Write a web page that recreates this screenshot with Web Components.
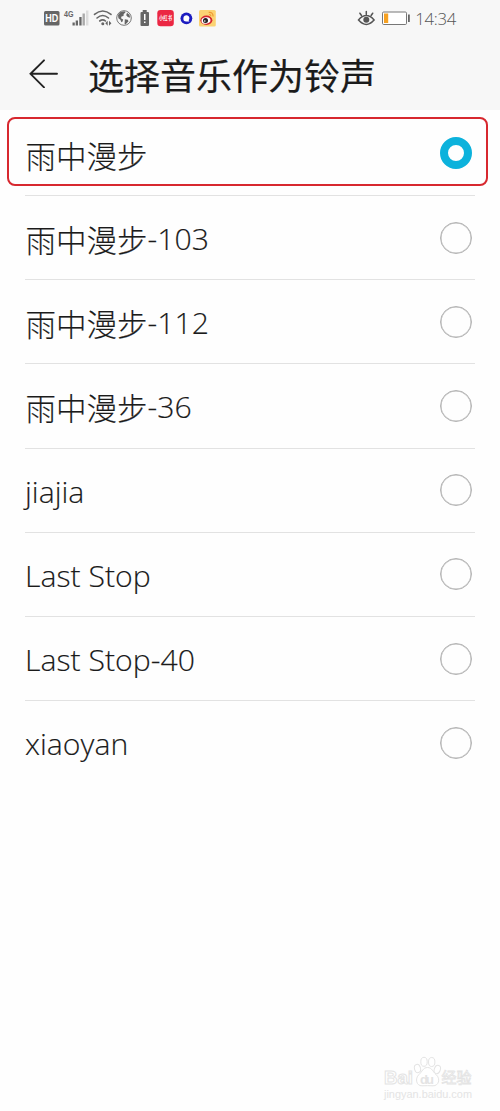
<!DOCTYPE html>
<html lang="zh-CN">
<head>
<meta charset="UTF-8">
<title>选择音乐作为铃声</title>
<style>
    html, body {
        margin: 0;
        background: #fefefe;
    }

    body {
        font-family: "Open Sans", "Noto Sans CJK SC", sans-serif;
        color: #1b1b1b;
    }
</style>
</head>
<body>
<ringtone-screen></ringtone-screen>

<script>
const templateStatus = document.createElement("template");
templateStatus.innerHTML = `
    <style>
        :host {
            display: flex;
            justify-content: space-between;
            height: 36px;
            padding: 0 44px;
            box-sizing: border-box;
            color: #666;
        }

        .group {
            display: flex;
            align-items: center;
            height: 36px;
        }

        svg {
            display: block;
            flex: none;
        }

        text {
            font-family: "Liberation Sans", "Noto Sans CJK SC", sans-serif;
            font-weight: 700;
        }

        .time {
            font-size: 16.8px;
            font-weight: 300;
            line-height: 34px;
            padding-top: 2px;
            color: #555;
            margin-left: 4px;
            letter-spacing: -0.3px;
        }
    </style>

    <div class="group">
        <svg width="16" height="36" viewBox="0 0 16 36">
            <rect x="0" y="11" width="15.5" height="14.5" rx="1.5" fill="#666"/>
            <text x="7.8" y="22" font-size="10.5" textLength="13" lengthAdjust="spacingAndGlyphs" text-anchor="middle" fill="#fff">HD</text>
        </svg>
        <svg width="31" height="36" viewBox="60 0 31 36">
            <text x="64" y="17.3" font-size="9.5" textLength="9.5" lengthAdjust="spacingAndGlyphs" fill="#666">4G</text>
            <path d="M72.5 22.5h2.3v3h-2.3zM75.7 20.500h2.300v5h-2.300zM79.300 17h2.300v8.500h-2.300z" fill="#666"/>
            <path d="M82.500 13.500h2.400v12h-2.400z" fill="#aaa"/>
            <path d="M86 10.500h2.400v15H86z" fill="#ddd"/>
        </svg>
        <svg width="24" height="36" viewBox="91 0 24 36">
            <g fill="none" stroke="#666" stroke-width="1.6" stroke-linecap="round">
                <path d="M94.500 14.400Q102.700 7.600 111 14.400M97 18Q102.700 13 108.500 18M99.700 21Q102.700 18.700 105.500 21"/>
            </g>
            <circle cx="102.8" cy="23.8" r="1.5" fill="#666"/>
            <path d="M107.700 20.800v5l-2.400-2.500zM109 20.800v5l2.400-2.500z" fill="#666"/>
        </svg>
        <svg width="20" height="36" viewBox="115 0 20 36">
            <circle cx="124" cy="18" r="7.3" fill="#f8f8f8" stroke="#777" stroke-width="1"/>
            <path d="M118 15l2.500-3 4-.8 1 1.300-1.800 1.500-.2 2-2 .5-.5 1.700 2.200 1.200-.8 2.400-1 .5-1-2.500-2-1.600zM127 12.800l2.500 2 .6 3-2.300-.8-1.600-1.700zM124.800 19.300l2.900.5.8 1.500-2.800 2.900-1.100-.3z" fill="#666"/>
        </svg>
        <svg width="18" height="36" viewBox="135 0 18 36">
            <path d="M142.700 10h4v2h1.300q1 0 1 1v12q0 1-1 1h-6.500q-1 0-1-1V13q0-1 1-1h1.200z" fill="#666"/>
            <path d="M144 14h1.500v6H144zM144 21.500h1.500V23H144z" fill="#fff"/>
        </svg>
        <svg width="24" height="36" viewBox="153 0 24 36">
            <rect x="157.3" y="10" width="16.5" height="16.2" rx="3.2" fill="#eb2743"/>
            <text x="165.5" y="20.3" font-size="5.2" textLength="13" lengthAdjust="spacingAndGlyphs" text-anchor="middle" fill="#fff">小红书</text>
        </svg>
        <svg width="19" height="36" viewBox="177 0 19 36">
            <circle cx="186.4" cy="18.3" r="5.9" fill="#1c1cc0"/>
            <path d="M183.400 18.300a3 3 0 1 1 5.200 2l.8 1.300h-3a3 3 0 0 1-3-3.300z" fill="#fff"/>
        </svg>
        <svg width="22" height="36" viewBox="196 0 22 36">
            <rect x="199" y="10" width="16.8" height="16.4" rx="1.5" fill="#fbd373"/>
            <ellipse cx="206.4" cy="20.2" rx="6" ry="4.7" fill="#d4252d"/>
            <ellipse cx="206" cy="20.5" rx="4.5" ry="3.2" fill="#fff" transform="rotate(-8 206 20.5)"/>
            <circle cx="205.5" cy="20.5" r="2.5" fill="#222"/>
            <circle cx="204.8" cy="21" r=".8" fill="#fff"/>
            <path d="M208.700 12.400q4.300-.6 4.400 4M209 14.500q1.900 0 1.800 1.800" fill="none" stroke="#ef9a32" stroke-width="1.2"/>
        </svg>
    </div>

    <div class="group">
        <svg width="20" height="36" viewBox="357 0 20 36">
            <g fill="none" stroke="#555" stroke-width="1.5" stroke-linecap="round">
                <path d="M358.500 20q7.800-8.800 15.600 0-7.800 8.800-15.600 0zM366.300 14.500v-3M361.500 15.500l-1.600-2.300M371.100 15.500l1.600-2.300"/>
            </g>
            <circle cx="366.3" cy="19.8" r="3" fill="#555"/>
        </svg>
        <svg width="34" height="36" viewBox="377 0 34 36">
            <rect x="382.5" y="12" width="24" height="12.5" rx="1.2" fill="#fff" stroke="#777"/>
            <rect x="384" y="13.5" width="4.2" height="9.5" fill="#f6a122"/>
            <rect x="408" y="14.5" width="1.8" height="7.5" fill="#666"/>
        </svg>
        <span class="time">14:34</span>
    </div>
`;

class StatusBar extends HTMLElement {
    constructor() {
        super();
        this.attachShadow({ mode: "open" });
        this.shadowRoot.appendChild(templateStatus.content.cloneNode(true));
    }
}

const templateHeader = document.createElement("template");
templateHeader.innerHTML = `
    <style>
        :host {
            display: flex;
            align-items: center;
            height: 74px;
            padding-left: 28px;
        }

        svg {
            display: block;
            margin-right: 30px;
        }

        h1 {
            margin: 0;
            padding-top: 2px;
            font: 400 36px/72px "Noto Sans CJK SC", sans-serif;
            -webkit-text-stroke: 0.2px currentColor;
        }
    </style>

    <svg width="30" height="30" viewBox="0 0 30 30" fill="none" stroke="#222" stroke-width="1.9" stroke-linecap="round">
        <path d="M3 15.800h26M16 2.300L2.500 15.800 16 29.300"/>
    </svg>
    <h1><slot></slot></h1>
`;

class PageHeader extends HTMLElement {
    constructor() {
        super();
        this.attachShadow({ mode: "open" });
        this.shadowRoot.appendChild(templateHeader.content.cloneNode(true));
    }
}

const templateItem = document.createElement("template");
templateItem.innerHTML = `
    <style>
        :host {
            display: flex;
            align-items: center;
            justify-content: space-between;
            position: relative;
            height: 84.2px;
            margin: 0 25px;
            padding-right: 3px;
            box-sizing: border-box;
            border-bottom: 1px solid #e2e2e2;
            font-size: 30.2px;
            font-weight: 300;
        }

        :host(:last-of-type) {
            border-bottom-color: transparent;
        }

        .label {
            display: flex;
            line-height: 40px;
            padding-top: 3px;
            -webkit-text-stroke: 0.15px currentColor;
        }

        /* han glyphs sit a little lower than the latin ones */
        .han {
            padding-top: 1px;
            margin-bottom: -1px;
            font-size: 30.5px;
        }

        .han:not(:empty) {
            margin-left: 0.5px;
        }

        .radio {
            width: 32px;
            height: 32px;
            box-sizing: border-box;
            border: 1.5px solid #b3b3b3;
            border-radius: 50%;
            box-shadow: inset 0 0 0 0.5px #b3b3b3;
        }

        :host([checked]) .radio {
            border: 8px solid #0cb2dc;
            box-shadow: none;
        }

        /* marker frame drawn over the chosen row */
        :host([checked])::after {
            content: "";
            position: absolute;
            top: 5px;
            left: -18px;
            right: -13px;
            height: 69px;
            box-sizing: border-box;
            border: 2px solid #d7282f;
            border-radius: 8px;
        }
    </style>

    <span class="label"><span class="han"></span><span class="latin"></span></span>
    <span class="radio"></span>
`;

class RingtoneItem extends HTMLElement {
    constructor() {
        super();
        this.attachShadow({ mode: "open" });
        this.shadowRoot.appendChild(templateItem.content.cloneNode(true));
    }

    connectedCallback() {
        const [, han, latin] = this.getAttribute("name").match(/^([\u4e00-\u9fff]*)(.*)$/);
        this.shadowRoot.querySelector(".han").textContent = han;
        this.shadowRoot.querySelector(".latin").textContent = latin;
    }
}

const templateWatermark = document.createElement("template");
templateWatermark.innerHTML = `
    <style>
        :host {
            display: block;
            width: 92px;
        }

        svg {
            display: block;
        }

        text {
            font-family: "Liberation Sans", "Noto Sans CJK SC", sans-serif;
        }
    </style>

    <svg width="92" height="46" viewBox="382 1055 92 46">
        <g fill="#fff" stroke="#e4e4e4" stroke-width="1">
            <ellipse cx="417.5" cy="1068.5" rx="3" ry="4.2" transform="rotate(-15 417.5 1068.5)"/>
            <ellipse cx="424" cy="1061.8" rx="3.2" ry="4.5"/>
            <ellipse cx="431.7" cy="1062" rx="3.2" ry="4.5"/>
            <ellipse cx="437.3" cy="1069.5" rx="3" ry="4.2" transform="rotate(20 437.3 1069.5)"/>
            <path d="M427.500 1067.500c4.500 0 5.500 4.500 8.500 7 5 4.500 2.500 11.500-3 11.300-4-.2-7-.2-11 0-5.500.2-7.500-7-3-11.300 3-2.500 4-7 8.500-7z"/>
            <text x="384" y="1084" font-size="18" font-weight="700" textLength="29" lengthAdjust="spacingAndGlyphs">Bai</text>
            <text x="441.5" y="1083" font-size="15" font-weight="400" textLength="30" lengthAdjust="spacingAndGlyphs" stroke-width=".8">经验</text>
        </g>
        <text x="420" y="1083.5" font-size="13" font-weight="700" textLength="14" fill="#e4e4e4">du</text>
        <text x="384" y="1098" font-size="10" textLength="88" lengthAdjust="spacingAndGlyphs" fill="#e4e4e4">jingyan.baidu.com</text>
    </svg>
`;

class PageWatermark extends HTMLElement {
    constructor() {
        super();
        this.attachShadow({ mode: "open" });
        this.shadowRoot.appendChild(templateWatermark.content.cloneNode(true));
    }
}

const templateScreen = document.createElement("template");
templateScreen.innerHTML = `
    <style>
        :host {
            display: flex;
            flex-direction: column;
            width: 500px;
            height: 1111px;
            overflow: hidden;
        }

        header {
            background: #f7f7f7;
            margin-bottom: 1.8px;
        }

        page-watermark {
            margin: auto 26px 10px auto;
        }
    </style>

    <header>
        <status-bar></status-bar>
        <page-header>选择音乐作为铃声</page-header>
    </header>
    <main></main>
    <page-watermark></page-watermark>
`;

const RINGTONES = [
    "雨中漫步",
    "雨中漫步-103",
    "雨中漫步-112",
    "雨中漫步-36",
    "jiajia",
    "Last Stop",
    "Last Stop-40",
    "xiaoyan"
];

class RingtoneScreen extends HTMLElement {
    constructor() {
        super();
        this.attachShadow({ mode: "open" });
        this.selected = 0;
    }

    connectedCallback() {
        if (this.shadowRoot.querySelector("main")) return;

        this.shadowRoot.appendChild(templateScreen.content.cloneNode(true));
        const list = this.shadowRoot.querySelector("main");

        RINGTONES.forEach((name, index) => {
            const item = document.createElement("ringtone-item");
            item.setAttribute("name", name);
            item.toggleAttribute("checked", index === this.selected);
            item.addEventListener("click", () => this.select(index));
            list.appendChild(item);
        });
    }

    select(index) {
        this.selected = index;
        this.shadowRoot.querySelectorAll("ringtone-item").forEach((item, i) => {
            item.toggleAttribute("checked", i === index);
        });
    }
}

customElements.define("status-bar", StatusBar);
customElements.define("page-header", PageHeader);
customElements.define("ringtone-item", RingtoneItem);
customElements.define("page-watermark", PageWatermark);
customElements.define("ringtone-screen", RingtoneScreen);
</script>
</body>
</html>
